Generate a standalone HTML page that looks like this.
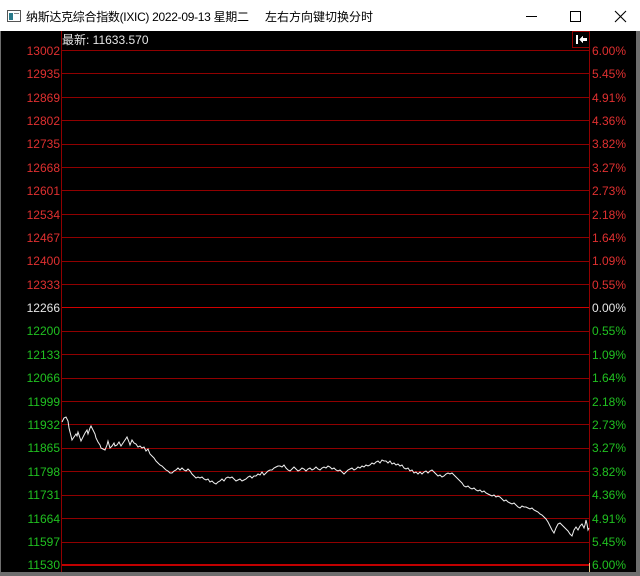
<!DOCTYPE html>
<html><head><meta charset="utf-8"><style>
html,body{margin:0;padding:0;width:640px;height:576px;overflow:hidden;background:#6e6e6e;font-family:"Liberation Sans","Noto Sans CJK SC",sans-serif}
#title{position:absolute;left:0;top:0;width:640px;height:31px;background:#fff}
#title .t{position:absolute;top:8px;font-size:12px;color:#000;white-space:nowrap}
#chart{position:absolute;left:1px;top:31px;width:635px;height:541px;background:#000}
</style></head><body>
<div id="title">
 <svg width="16" height="16" style="position:absolute;left:6px;top:8px"><rect x="1.5" y="2.5" width="13" height="11" fill="#fff" stroke="#555"/><rect x="3" y="5" width="4" height="7" fill="#2a7a8a"/><rect x="8" y="5" width="5" height="1" fill="#888"/></svg>
 <div class="t" style="left:26px;letter-spacing:-0.3px">纳斯达克综合指数(IXIC) 2022-09-13 星期二</div>
 <div class="t" style="left:265px">左右方向键切换分时</div>
 <svg width="640" height="31" style="position:absolute;left:0;top:0">
  <line x1="526" y1="16.5" x2="537" y2="16.5" stroke="#000" stroke-width="1"/>
  <rect x="570.5" y="11.5" width="10" height="10" fill="none" stroke="#000"/>
  <path d="M615 11L626 22M626 11L615 22" stroke="#000" stroke-width="1.1"/>
 </svg>
</div>
<div id="chart"></div>
<svg width="640" height="576" style="position:absolute;left:0;top:0" font-family="Liberation Sans, sans-serif" font-size="12" shape-rendering="crispEdges">
<g fill="#900000">
<rect x="62" y="50" width="527" height="1"/><rect x="62" y="73" width="527" height="1"/><rect x="62" y="97" width="527" height="1"/><rect x="62" y="120" width="527" height="1"/><rect x="62" y="144" width="527" height="1"/><rect x="62" y="167" width="527" height="1"/><rect x="62" y="190" width="527" height="1"/><rect x="62" y="214" width="527" height="1"/><rect x="62" y="237" width="527" height="1"/><rect x="62" y="261" width="527" height="1"/><rect x="62" y="284" width="527" height="1"/>
<rect x="62" y="331" width="527" height="1"/><rect x="62" y="354" width="527" height="1"/><rect x="62" y="378" width="527" height="1"/><rect x="62" y="401" width="527" height="1"/><rect x="62" y="424" width="527" height="1"/><rect x="62" y="448" width="527" height="1"/><rect x="62" y="471" width="527" height="1"/><rect x="62" y="495" width="527" height="1"/><rect x="62" y="518" width="527" height="1"/><rect x="62" y="542" width="527" height="1"/>
<rect x="61" y="31" width="1" height="541"/><rect x="589" y="31" width="1" height="532"/>
</g>
<rect x="62" y="307" width="527" height="1" fill="#d00000"/>
<rect x="62" y="564" width="527" height="2" fill="#c00000"/>
<rect x="589" y="563" width="1" height="9" fill="#e0c080"/>
<rect x="572.5" y="31.5" width="17" height="16" fill="#000" stroke="#900000"/>
<path d="M577 35v9" stroke="#fff" stroke-width="2"/><path d="M579 39.5l4-4v2.5h4v3h-4v2.5z" fill="#fff"/>
<text x="62" y="44" fill="#e6e6e6">最新: 11633.570</text>
<g text-anchor="end" fill="#e03030">
<text x="60" y="55">13002</text><text x="60" y="78">12935</text><text x="60" y="102">12869</text><text x="60" y="125">12802</text><text x="60" y="148">12735</text><text x="60" y="172">12668</text><text x="60" y="195">12601</text><text x="60" y="219">12534</text><text x="60" y="242">12467</text><text x="60" y="265">12400</text><text x="60" y="289">12333</text>
</g>
<text x="60" y="312" text-anchor="end" fill="#e6e6e6">12266</text>
<g text-anchor="end" fill="#20c020">
<text x="60" y="335">12200</text><text x="60" y="359">12133</text><text x="60" y="382">12066</text><text x="60" y="406">11999</text><text x="60" y="429">11932</text><text x="60" y="452">11865</text><text x="60" y="476">11798</text><text x="60" y="499">11731</text><text x="60" y="523">11664</text><text x="60" y="546">11597</text><text x="60" y="569">11530</text>
</g>
<g fill="#e03030">
<text x="592" y="55">6.00%</text><text x="592" y="78">5.45%</text><text x="592" y="102">4.91%</text><text x="592" y="125">4.36%</text><text x="592" y="148">3.82%</text><text x="592" y="172">3.27%</text><text x="592" y="195">2.73%</text><text x="592" y="219">2.18%</text><text x="592" y="242">1.64%</text><text x="592" y="265">1.09%</text><text x="592" y="289">0.55%</text>
</g>
<text x="592" y="312" fill="#e6e6e6">0.00%</text>
<g fill="#20c020">
<text x="592" y="335">0.55%</text><text x="592" y="359">1.09%</text><text x="592" y="382">1.64%</text><text x="592" y="406">2.18%</text><text x="592" y="429">2.73%</text><text x="592" y="452">3.27%</text><text x="592" y="476">3.82%</text><text x="592" y="499">4.36%</text><text x="592" y="523">4.91%</text><text x="592" y="546">5.45%</text><text x="592" y="569">6.00%</text>
</g>
<polyline shape-rendering="auto" fill="none" stroke="#f0f0f0" stroke-width="1" points="62,422 64,418 66,417 68,421 69,428 71,436 72,440 74,437 76,434 77,436 78,432 80,438 81,441 83,437 85,433 87,430 88,434 90,428 91,426 93,430 95,434 96,438 98,442 100,445 101,448 103,449 105,450 107,445 108,441 110,448 112,446 114,443 115,446 117,445 119,442 121,446 123,443 125,440 127,437 129,442 130,445 132,440 134,443 136,444 138,447 140,446 142,448 144,447 146,451 148,449 150,454 152,456 154,458 156,461 158,463 160,465 162,466 164,468 166,470 168,471 170,473 172,473 174,471 176,470 178,468 180,470 182,468 184,470 186,471 188,469 190,471 192,474 194,476 196,478 198,477 200,478 202,477 204,479 206,480 208,479 210,482 212,481 214,483 216,484 218,482 220,481 222,479 224,481 226,478 228,477 230,478 232,477 234,479 236,481 238,480 240,479 242,481 244,480 246,479 248,477 250,476 252,478 254,476 256,476 258,474 260,475 262,472 264,475 266,473 268,471 270,470 272,470 274,468 276,467 278,466 280,466 282,467 284,465 286,468 288,470 290,471 292,469 294,467 296,469 298,471 300,470 302,468 304,469 306,471 308,469 310,468 312,470 314,469 316,467 318,469 320,470 322,468 324,467 326,468 328,466 330,467 332,469 334,468 336,470 338,471 340,470 342,472 344,474 346,472 348,470 350,469 352,468 354,470 356,469 358,467 360,468 362,466 364,467 366,465 368,466 370,465 372,463 374,464 376,462 378,461 380,463 382,460 384,461 386,461 388,463 390,461 392,464 394,463 396,465 398,464 400,466 402,465 404,468 406,469 408,468 410,471 412,470 414,473 416,472 418,474 420,472 422,474 424,472 426,471 428,473 430,471 432,470 434,472 436,474 438,476 440,475 442,477 444,476 446,474 448,473 450,474 452,473 454,475 456,477 458,479 460,481 462,483 464,486 466,487 468,486 470,488 472,489 474,488 476,490 478,491 480,490 482,492 484,491 486,493 488,494 490,495 492,496 494,495 496,497 498,496 500,497 502,499 504,501 506,500 508,502 510,503 512,504 514,503 516,505 518,507 520,508 522,506 524,507 526,507 528,508 530,509 532,508 534,510 536,511 538,512 540,514 542,515 544,517 546,519 548,522 550,526 552,530 554,533 556,528 558,524 560,523 562,525 564,527 566,529 568,531 570,534 572,536 574,530 576,527 578,530 580,526 582,524 584,528 585,525 586,520 587,524 588,530 589,528"/>
</svg>
</body></html>
